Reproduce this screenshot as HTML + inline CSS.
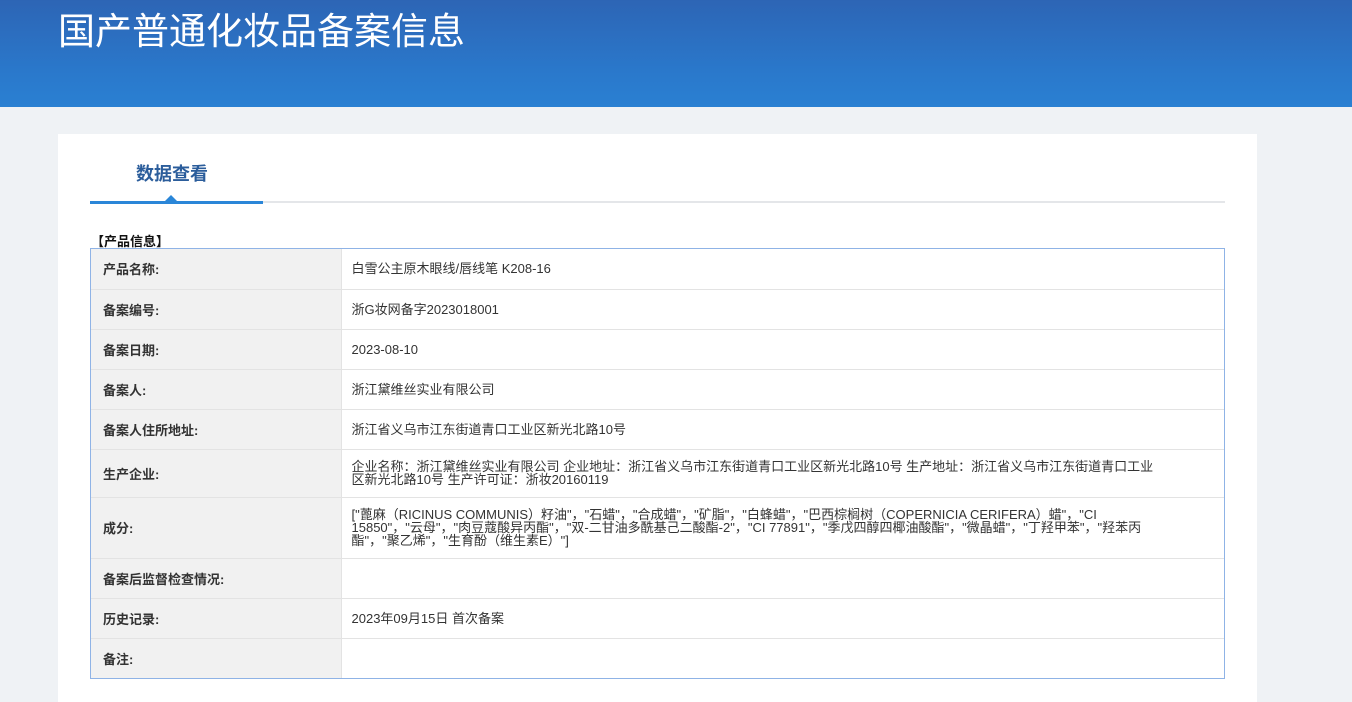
<!DOCTYPE html>
<html><head><meta charset="utf-8"><style>
*{margin:0;padding:0;box-sizing:border-box}
html,body{width:1352px;height:702px;overflow:hidden}
body{background:#eff2f5;font-family:"Liberation Sans","Noto Sans CJK SC",sans-serif;position:relative}
.hdr{position:absolute;left:0;top:0;width:1352px;height:107px;background:linear-gradient(180deg,#2d65b5 0%,#2a79cc 70%,#2a80d2 100%);overflow:hidden}
.hdr h1{position:absolute;left:58px;top:9px;font-size:37px;font-weight:normal;color:#fff;line-height:46px}
.card{position:absolute;left:58px;top:134px;width:1199px;height:568px;background:#fff}
.tab{position:absolute;left:136px;top:160px;font-size:18px;font-weight:bold;color:#2b5d9b}
.ul{position:absolute;left:90px;top:201px;width:1135px;height:2px;background:#e4e6e9}
.ulb{position:absolute;left:90px;top:201px;width:173px;height:3px;background:#2a86d8}
.tri{position:absolute;left:165px;top:195px;width:0;height:0;border-left:6px solid transparent;border-right:6px solid transparent;border-bottom:6px solid #2a86d8}
.sec{position:absolute;left:91px;top:231px;font-size:13px;font-weight:bold;color:#111}
.wrap{position:absolute;left:90px;top:248px;width:1135px;border:1px solid #8fb3e6}
table{width:100%;border-collapse:collapse;font-size:13px;color:#333}
td{border-bottom:1px solid #e3e3e3;vertical-align:middle}
tr:last-child td{border-bottom:none}
td.k{width:250px;background:#f1f1f1;font-weight:bold;padding-left:12px;border-right:1px solid #e3e3e3;color:#333}
td.v{padding-left:10px;padding-right:60px;line-height:13px}
</style></head><body>
<div class="hdr"><h1>国产普通化妆品备案信息</h1></div>
<div class="card"></div>
<div class="tab">数据查看</div>
<div class="ul"></div><div class="ulb"></div><div class="tri"></div>
<div class="sec">【产品信息】</div>
<div class="wrap"><table>
<tr style="height:40px"><td class="k">产品名称:</td><td class="v">白雪公主原木眼线/唇线笔 K208-16</td></tr>
<tr style="height:40px"><td class="k">备案编号:</td><td class="v">浙G妆网备字2023018001</td></tr>
<tr style="height:40px"><td class="k">备案日期:</td><td class="v">2023-08-10</td></tr>
<tr style="height:40px"><td class="k">备案人:</td><td class="v">浙江黛维丝实业有限公司</td></tr>
<tr style="height:40px"><td class="k">备案人住所地址:</td><td class="v">浙江省义乌市江东街道青口工业区新光北路10号</td></tr>
<tr style="height:48px"><td class="k">生产企业:</td><td class="v">企业名称：浙江黛维丝实业有限公司 企业地址：浙江省义乌市江东街道青口工业区新光北路10号 生产地址：浙江省义乌市江东街道青口工业区新光北路10号 生产许可证：浙妆20160119</td></tr>
<tr style="height:61px"><td class="k">成分:</td><td class="v">["蓖麻（RICINUS COMMUNIS）籽油"，"石蜡"，"合成蜡"，"矿脂"，"白蜂蜡"，"巴西棕榈树（COPERNICIA CERIFERA）蜡"，"CI 15850"，"云母"，"肉豆蔻酸异丙酯"，"双-二甘油多酰基己二酸酯-2"，"CI 77891"，"季戊四醇四椰油酸酯"，"微晶蜡"，"丁羟甲苯"，"羟苯丙酯"，"聚乙烯"，"生育酚（维生素E）"]</td></tr>
<tr style="height:40px"><td class="k">备案后监督检查情况:</td><td class="v"></td></tr>
<tr style="height:40px"><td class="k">历史记录:</td><td class="v">2023年09月15日 首次备案</td></tr>
<tr style="height:40px"><td class="k">备注:</td><td class="v"></td></tr>
</table></div>
</body></html>
